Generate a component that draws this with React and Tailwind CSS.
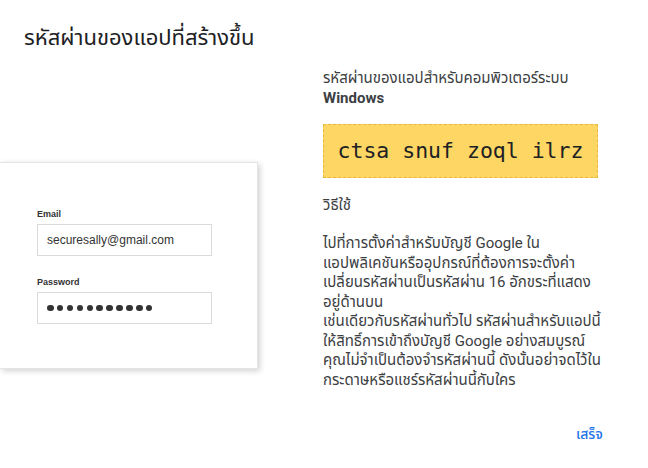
const THAI = 'Roboto, "Noto Sans Thai", "Noto Sans", sans-serif'
const ARIAL = '"Liberation Sans", Arial, sans-serif'

export default function App() {
  return (
    <div
      className="w-[648px] h-[468px] bg-white relative overflow-hidden text-[#3c4043]"
      style={{ fontFamily: THAI }}
    >
      {/* Title */}
      <h1 className="absolute left-[24px] top-[24px] text-[22px] leading-[28px] text-[#202124]">
        รหัสผ่านของแอปที่สร้างขึ้น
      </h1>

      <div className="flex pt-[68px]">
        {/* Illustration card */}
        <div className="w-[300px] shrink-0 pt-[94px]">
          <div className="w-[258px] h-[207px] bg-white border border-[#e4e4e4] border-l-0 shadow-[2px_2px_6px_rgba(0,0,0,0.18)] pl-[37px] pt-[45px]">
            <div className="text-[9px] leading-[12px] font-bold text-[#333] mb-[4px]" style={{ fontFamily: ARIAL }}>
              Email
            </div>
            <div
              className="w-[175px] h-[32px] border border-[#dadada] flex items-center px-[9px] text-[12px] text-[#333]"
              style={{ fontFamily: ARIAL }}
            >
              securesally@gmail.com
            </div>
            <div
              className="text-[9px] leading-[12px] font-bold text-[#333] mt-[20px] mb-[4px]"
              style={{ fontFamily: ARIAL }}
            >
              Password
            </div>
            <div className="w-[175px] h-[32px] border border-[#dadada] flex items-center px-[9px] gap-[3.4px]">
              {Array.from({ length: 11 }).map((_, i) => (
                <span key={i} className="w-[6.5px] h-[6.5px] rounded-full bg-[#333]" />
              ))}
            </div>
          </div>
        </div>

        {/* Right column */}
        <div className="ml-[23px] w-[325px] text-[15px] leading-[20px]">
          <p>รหัสผ่านของแอปสำหรับคอมพิวเตอร์ระบบ</p>
          <p className="font-bold">Windows</p>
          <div className="mt-[16px] w-[275px] h-[54px] bg-[#fdd663] border border-dashed border-[#e8b83a] flex items-center justify-center">
            <span
              className="text-[21.5px] whitespace-nowrap text-[#202124]"
              style={{ fontFamily: '"DejaVu Sans Mono", "Liberation Mono", monospace' }}
            >
              ctsa snuf zoql ilrz
            </span>
          </div>
          <p className="mt-[17px]">วิธีใช้</p>
          <p className="mt-[19px] leading-[19.5px] whitespace-nowrap">
            ไปที่การตั้งค่าสำหรับบัญชี Google ใน
            <br />
            แอปพลิเคชันหรืออุปกรณ์ที่ต้องการจะตั้งค่า
            <br />
            เปลี่ยนรหัสผ่านเป็นรหัสผ่าน 16 อักขระที่แสดง
            <br />
            อยู่ด้านบน
            <br />
            เช่นเดียวกับรหัสผ่านทั่วไป รหัสผ่านสำหรับแอปนี้
            <br />
            ให้สิทธิ์การเข้าถึงบัญชี Google อย่างสมบูรณ์
            <br />
            คุณไม่จำเป็นต้องจำรหัสผ่านนี้ ดังนั้นอย่าจดไว้ใน
            <br />
            กระดาษหรือแชร์รหัสผ่านนี้กับใคร
          </p>
        </div>
      </div>

      {/* Done button */}
      <button className="absolute left-[566px] top-[420px] px-[10px] h-[28px] text-[14px] font-medium text-[#1a73e8]">
        เสร็จ
      </button>
    </div>
  )
}
